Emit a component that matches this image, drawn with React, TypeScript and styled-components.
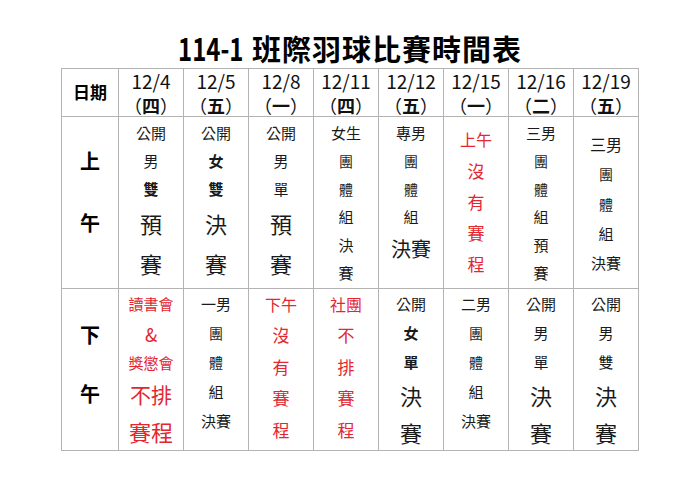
import { FC } from 'react'
import styled, { createGlobalStyle } from 'styled-components'

const GlobalStyle = createGlobalStyle`
	html, body {
		margin: 0;
		padding: 0;
		background: #fff;
	}
	body {
		font-family: "Noto Sans CJK TC", "Noto Sans", sans-serif;
		color: #111;
	}
`

type Line = { t: string; s: number; h: number; b?: boolean; red?: boolean }
type Cell = { pad: number; lines: Line[] }

const l = (t: string, s: number, h: number, opt: { b?: boolean; red?: boolean } = {}): Line => ({
	t,
	s,
	h,
	...opt,
})

const days = [
	{ date: '12/4', week: '四' },
	{ date: '12/5', week: '五' },
	{ date: '12/8', week: '一' },
	{ date: '12/11', week: '四' },
	{ date: '12/12', week: '五' },
	{ date: '12/15', week: '一' },
	{ date: '12/16', week: '二' },
	{ date: '12/19', week: '五' },
]

const red = { red: true }
const bold = { b: true }

// 上午
const morning: Cell[] = [
	{ pad: 2, lines: [l('公開', 15, 28), l('男', 15, 28), l('雙', 15, 28, bold), l('預', 22, 40), l('賽', 22, 40)] },
	{ pad: 2, lines: [l('公開', 15, 28), l('女', 15, 28, bold), l('雙', 15, 28, bold), l('決', 22, 40), l('賽', 22, 40)] },
	{ pad: 2, lines: [l('公開', 15, 28), l('男', 15, 28), l('單', 15, 28), l('預', 22, 40), l('賽', 22, 40)] },
	{
		pad: 2,
		lines: [l('女生', 15, 28), l('團', 14, 28), l('體', 14, 28), l('組', 15, 28), l('決', 15, 28), l('賽', 15, 28)],
	},
	{ pad: 2, lines: [l('專男', 15, 28), l('團', 14, 28), l('體', 14, 28), l('組', 15, 28), l('決賽', 20, 36)] },
	{
		pad: 7,
		lines: [l('上午', 16, 31, red), l('沒', 17, 31, red), l('有', 17, 31, red), l('賽', 17, 31, red), l('程', 17, 31, red)],
	},
	{
		pad: 2,
		lines: [l('三男', 15, 28), l('團', 14, 28), l('體', 14, 28), l('組', 15, 28), l('預', 15, 28), l('賽', 15, 28)],
	},
	{ pad: 12, lines: [l('三男', 16, 30), l('團', 14, 30), l('體', 14, 30), l('組', 15, 30), l('決賽', 15, 28)] },
]

// 下午
const afternoon: Cell[] = [
	{
		pad: 1,
		lines: [
			l('讀書會', 15, 28, red),
			l('&', 18, 32, red),
			l('獎懲會', 15, 26, red),
			l('不排', 21, 36, red),
			l('賽程', 22, 38, red),
		],
	},
	{ pad: 1, lines: [l('一男', 15, 28), l('團', 14, 30), l('體', 14, 29), l('組', 15, 29), l('決賽', 15, 29)] },
	{
		pad: 0,
		lines: [l('下午', 16, 30, red), l('沒', 17, 32, red), l('有', 17, 31, red), l('賽', 17, 32, red), l('程', 17, 31, red)],
	},
	{
		pad: 0,
		lines: [l('社團', 16, 30, red), l('不', 17, 32, red), l('排', 17, 31, red), l('賽', 17, 32, red), l('程', 17, 31, red)],
	},
	{ pad: 1, lines: [l('公開', 15, 28), l('女', 15, 30, bold), l('單', 15, 28, bold), l('決', 22, 38), l('賽', 22, 36)] },
	{ pad: 1, lines: [l('二男', 15, 28), l('團', 14, 30), l('體', 14, 29), l('組', 15, 29), l('決賽', 15, 29)] },
	{ pad: 1, lines: [l('公開', 15, 28), l('男', 15, 30), l('單', 15, 28), l('決', 22, 38), l('賽', 22, 36)] },
	{ pad: 1, lines: [l('公開', 15, 28), l('男', 15, 30), l('雙', 15, 28), l('決', 22, 38), l('賽', 22, 36)] },
]

const App: FC = () => {
	return (
		<>
			<GlobalStyle />
			<Page>
				<Title>
					<TitleNum>114-1</TitleNum> 班際羽球比賽時間表
				</Title>
				<Table>
					<HeadCell>
						<HeadLabel>日期</HeadLabel>
					</HeadCell>
					{days.map((d) => (
						<HeadCell key={d.date}>
							<DateText>{d.date}</DateText>
							<WeekText>
								<Paren>（</Paren>
								{d.week}
								<Paren>）</Paren>
							</WeekText>
						</HeadCell>
					))}

					<SideCell $pad={13} $gap={62}>
						<SideChar>上</SideChar>
						<SideChar>午</SideChar>
					</SideCell>
					{morning.map((c, i) => (
						<BodyCell key={'am' + i} $pad={c.pad}>
							{c.lines.map((ln, j) => (
								<TextLine key={j} $size={ln.s} $lh={ln.h} $bold={ln.b} $red={ln.red}>
									{ln.t}
								</TextLine>
							))}
						</BodyCell>
					))}

					<SideCell $pad={16} $gap={59}>
						<SideChar>下</SideChar>
						<SideChar>午</SideChar>
					</SideCell>
					{afternoon.map((c, i) => (
						<BodyCell key={'pm' + i} $pad={c.pad}>
							{c.lines.map((ln, j) => (
								<TextLine key={j} $size={ln.s} $lh={ln.h} $bold={ln.b} $red={ln.red}>
									{ln.t}
								</TextLine>
							))}
						</BodyCell>
					))}
				</Table>
			</Page>
		</>
	)
}

const Page = styled.div`
	width: 700px;
	display: flex;
	flex-direction: column;
	align-items: center;
`
const Title = styled.h1`
	margin: 33px 0 6px;
	font-size: 29px;
	line-height: 28px;
	letter-spacing: 1px;
	font-weight: 700;
	color: #000;
	white-space: pre;
`
const TitleNum = styled.span`
	display: inline-block;
	font-size: 32px;
	font-weight: 700;
	letter-spacing: 0;
	transform: scaleX(0.75);
	transform-origin: left center;
	margin-right: -21px;
`
const Table = styled.div`
	display: grid;
	grid-template-columns: 56px repeat(8, 64px);
	grid-template-rows: 47px 171px 161px;
	gap: 1px;
	padding: 1px;
	background: #b3b3b3;
`
const HeadCell = styled.div`
	background: #fff;
	display: flex;
	flex-direction: column;
	align-items: center;
	justify-content: center;
`
const HeadLabel = styled.div`
	font-size: 17px;
	font-weight: 700;
	color: #000;
	margin-top: -2px;
`
const DateText = styled.div`
	font-size: 19px;
	line-height: 24px;
	color: #111;
`
const WeekText = styled.div`
	font-size: 18px;
	line-height: 24px;
	font-weight: 700;
	color: #111;
`
const Paren = styled.span`
	font-weight: 400;
`
const SideCell = styled.div<{ $pad: number; $gap: number }>`
	background: #fff;
	display: flex;
	flex-direction: column;
	align-items: center;
	padding-top: ${(p) => p.$pad}px;
	& > div {
		line-height: ${(p) => p.$gap}px;
	}
`
const SideChar = styled.div`
	font-size: 20px;
	font-weight: 700;
	color: #000;
`
const BodyCell = styled.div<{ $pad: number }>`
	background: #fff;
	display: flex;
	flex-direction: column;
	align-items: center;
	padding-top: ${(p) => p.$pad}px;
`
const TextLine = styled.div<{ $size: number; $lh: number; $bold?: boolean; $red?: boolean }>`
	font-size: ${(p) => p.$size}px;
	line-height: ${(p) => p.$lh}px;
	height: ${(p) => p.$lh}px;
	font-weight: ${(p) => (p.$bold ? 700 : 400)};
	color: ${(p) => (p.$red ? '#e3262f' : '#1a1a1a')};
	white-space: nowrap;
`

export default App
